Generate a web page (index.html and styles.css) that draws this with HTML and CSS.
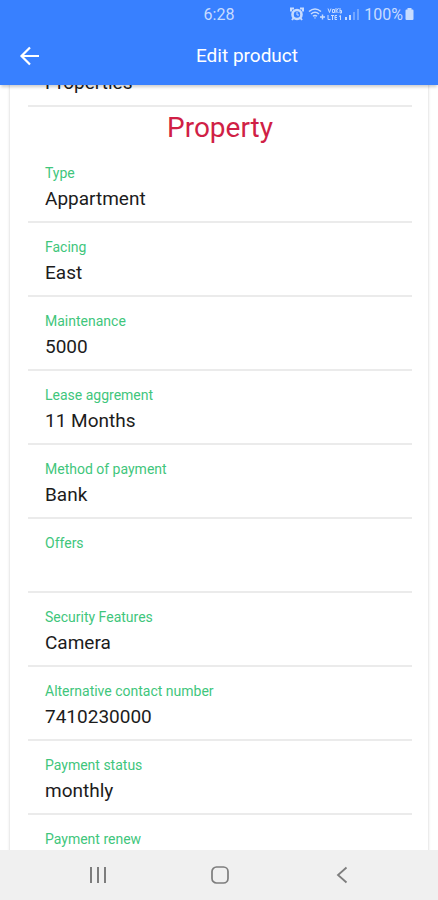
FILE: index.html
```html
<!DOCTYPE html>
<html lang="en">
<head>
<meta charset="utf-8">
<meta name="viewport" content="width=device-width, initial-scale=1">
<title>Edit product</title>
<link rel="stylesheet" href="styles.css">
</head>
<body>
<div class="status">
  <time class="clock">6:28</time>
  <div class="indicators">
    <svg width="14" height="14" viewBox="0 0 14 14" fill="none" stroke="currentColor"><circle cx="7" cy="7.500" r="4.500" stroke-width="2.600"/><path d="M1 4.500V1.500h3M10 1.500h3v3M2 13l2-2.500M12 13l-2-2.500" stroke-width="2"/><path d="M7 5v3h2" stroke-width="1"/></svg>
    <svg class="wifi" width="18" height="14" viewBox="0 0 18 14" fill="none" stroke="currentColor" stroke-width="1.500"><path d="M1 4.500q6-5 12 0M3 7q4-3.400 8 0M5 9.300q2-1.700 4 0"/><path d="M6 10.500h2L7 12z" fill="currentColor" stroke="none"/><path d="M12 10h5M14.500 7.500v5" stroke-width="1.400"/></svg>
    <svg width="18" height="14" viewBox="0 0 16 14" fill="none" stroke="currentColor" stroke-width="1"><path d="M1 1.500l1.500 4L4 1.500M5.500 2.500h2v3h-2zM9 1v5M11.500 1l-2 3 2 2M13 1v5h1.500V3.500H13M1 8v4.500h2.500M4 8.500h3M5.500 8.500V13M10 8.500H8v4h2M8 10.500h2M12 9.500l1.500-1V13"/></svg>
    <svg width="15" height="14" viewBox="0 0 15 14" fill="currentColor"><path d="M1 10h2v3H1zM5 8h2v5H5z"/><path d="M9 5h2v8H9zM13 2h2v11h-2z" opacity=".4"/></svg>
    <span class="percent">100%</span>
    <svg width="11" height="14" viewBox="0 0 10 14" fill="currentColor"><path d="M3 1h4v1.500h1q1 0 1 1V12q0 1-1 1H2q-1 0-1-1V3.500q0-1 1-1h1z"/></svg>
  </div>
</div>
<header class="toolbar">
  <button class="back" type="button" aria-label="Back">
    <svg width="22" height="22" viewBox="0 0 22 22" fill="none" stroke="currentColor" stroke-width="2.200"><path d="M20 11H3M11 2.500L2.500 11l8.500 8.500"/></svg>
  </button>
  <h1 class="title">Edit product</h1>
</header>
<main class="content">
  <form class="card">
    <div class="field"><input class="value value-only" aria-label="Category" value="Properties"></div>
    <h2 class="section">Property</h2>
    <div class="field"><label class="label" for="type">Type</label><input class="value" id="type" value="Appartment"></div>
    <div class="field"><label class="label" for="facing">Facing</label><input class="value" id="facing" value="East"></div>
    <div class="field"><label class="label" for="maintenance">Maintenance</label><input class="value" id="maintenance" value="5000"></div>
    <div class="field"><label class="label" for="lease">Lease aggrement</label><input class="value" id="lease" value="11 Months"></div>
    <div class="field"><label class="label" for="method">Method of payment</label><input class="value" id="method" value="Bank"></div>
    <div class="field"><label class="label" for="offers">Offers</label><input class="value" id="offers" value=""></div>
    <div class="field"><label class="label" for="security">Security Features</label><input class="value" id="security" value="Camera"></div>
    <div class="field"><label class="label" for="contact">Alternative contact number</label><input class="value" id="contact" value="7410230000"></div>
    <div class="field"><label class="label" for="status">Payment status</label><input class="value" id="status" value="monthly"></div>
    <div class="field"><label class="label" for="renew">Payment renew</label><input class="value" id="renew" value=""></div>
  </form>
</main>
<nav class="navbar" aria-label="System">
  <button class="nav-button" type="button" aria-label="Recent apps"><svg width="20" height="20" viewBox="0 0 20 20" fill="none" stroke="currentColor" stroke-width="2"><path d="M3 2v16M10 2v16M17 2v16"/></svg></button>
  <button class="nav-button" type="button" aria-label="Home"><svg width="20" height="20" viewBox="0 0 20 20" fill="none" stroke="currentColor" stroke-width="1.700"><rect x="2" y="2" width="16" height="16" rx="4.500"/></svg></button>
  <button class="nav-button" type="button" aria-label="Back"><svg width="20" height="20" viewBox="0 0 20 20" fill="none" stroke="currentColor" stroke-width="1.800"><path d="M14.500 2.500L6 10l8.500 7.500"/></svg></button>
</nav>
</body>
</html>
```
FILE: styles.css
```css
* { box-sizing: border-box; }

body {
  margin: 0;
  height: 100vh;
  display: flex;
  flex-direction: column;
  overflow: hidden;
  background: #fff;
  color: #1c1c1c;
  font-family: Roboto, sans-serif;
}

button {
  padding: 0;
  border: 0;
  background: none;
  color: inherit;
  display: grid;
  place-items: center;
}

.status {
  flex: none;
  height: 28px;
  display: grid;
  grid-template-columns: 1fr auto 1fr;
  align-items: center;
  padding: 0 23px;
  background: #3880ff;
  color: #c8dcff;
  font-size: 16px;
}

.clock { grid-column: 2; }

.indicators {
  display: flex;
  align-items: center;
  justify-content: flex-end;
}

.wifi { margin-left: 4px; }

.percent { margin: 0 1px 0 5px; }

.toolbar {
  flex: none;
  height: 57px;
  display: grid;
  grid-template-columns: 60px 1fr;
  align-items: center;
  padding-bottom: 2px;
  background: #3880ff;
  color: #fff;
  box-shadow: 0 3px 3px -1px rgba(0, 0, 0, 0.2);
  z-index: 1;
}

.back { height: 44px; }

.title {
  margin: 0;
  padding-right: 4px;
  text-align: center;
  font-size: 19px;
  font-weight: 400;
}

.content {
  flex: 1;
  min-height: 0;
  overflow: hidden;
  padding: 0 10px;
}

.card {
  margin-top: -52px;
  padding: 0 16px 0 18px;
  border-radius: 4px;
  box-shadow: 0 0 3px rgba(0, 0, 0, 0.22);
}

.field {
  height: 74px;
  padding: 16px 17px 0;
  border-bottom: 2px solid #ebebeb;
}

.label {
  display: block;
  height: 16px;
  line-height: 16px;
  font-size: 14px;
  color: #3fc67c;
}

.value {
  display: block;
  width: 100%;
  height: 36px;
  padding: 0;
  border: 0;
  outline: 0;
  background: none;
  color: inherit;
  font: 19px/36px Roboto, sans-serif;
}

.value-only { margin-top: 16px; }

.section {
  margin: 0;
  height: 42px;
  line-height: 42px;
  text-align: center;
  font-size: 28px;
  font-weight: 400;
  color: #d01f46;
}

.navbar {
  flex: none;
  height: 50px;
  display: grid;
  grid-template-columns: repeat(3, 1fr);
  padding: 0 35px 0 37px;
  background: #f0f0f0;
  color: #7d7d7d;
}
```
